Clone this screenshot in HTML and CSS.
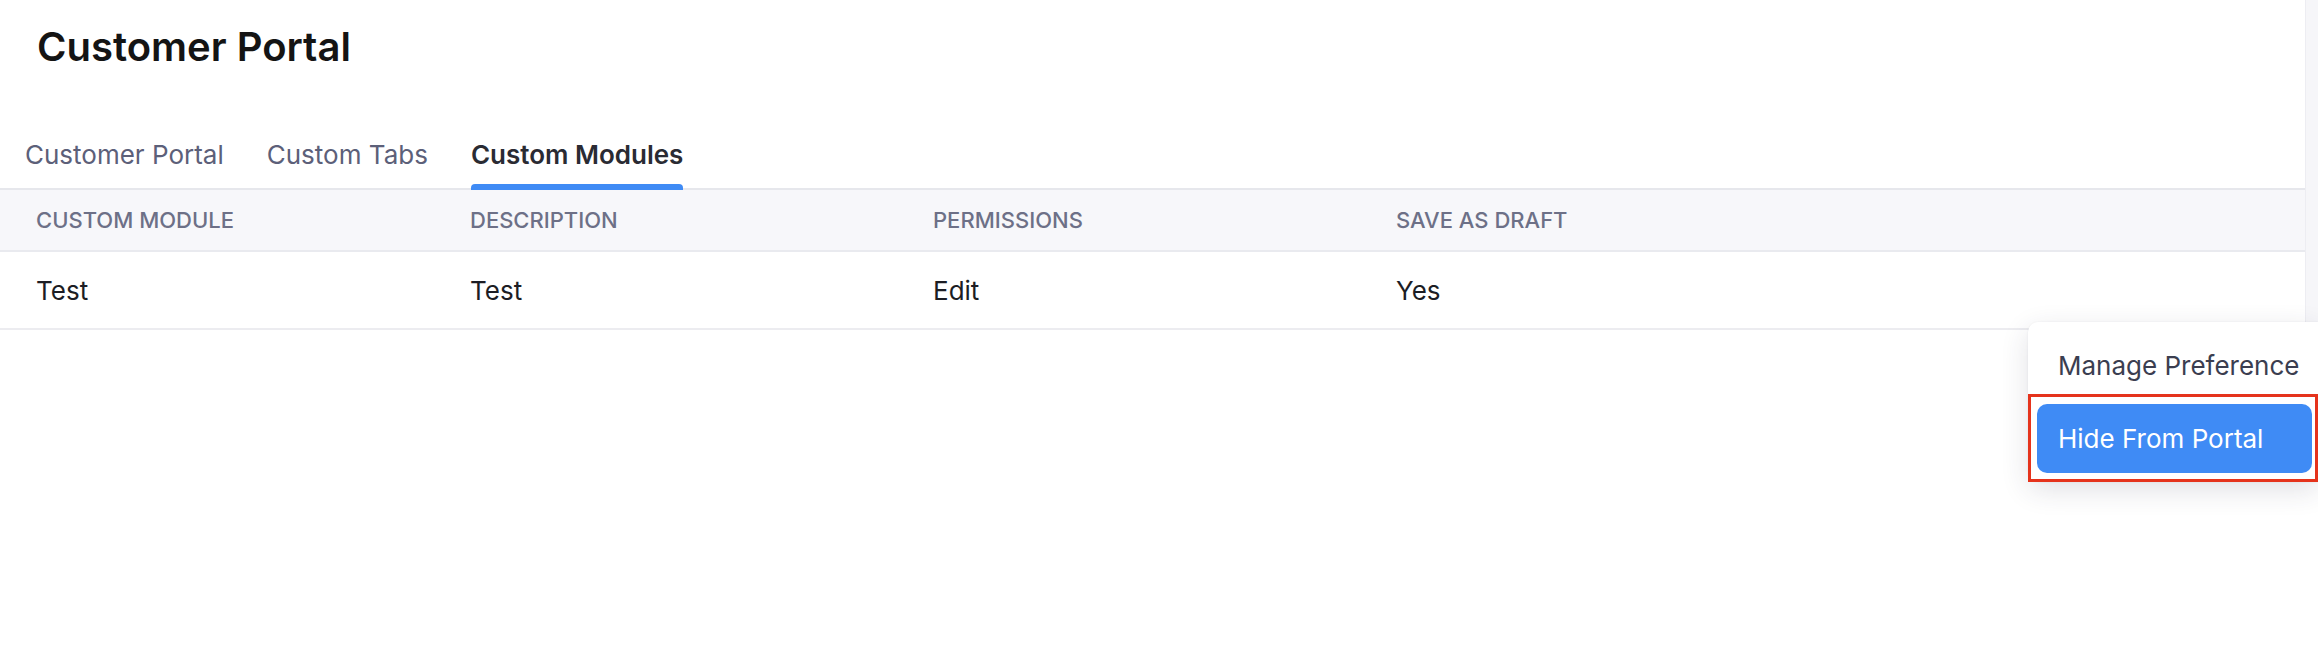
FILE: index.html
```html
<!DOCTYPE html>
<html lang="en">
<head>
<meta charset="utf-8">
<title>Customer Portal</title>
<link rel="stylesheet" href="styles.css">
</head>
<body>
<div class="page">
  <main class="panel">
    <h1 class="title">Customer Portal</h1>
    <nav class="tabs">
      <div class="tab">Customer Portal</div>
      <div class="tab">Custom Tabs</div>
      <div class="tab active">Custom Modules</div>
    </nav>
    <div class="table">
      <div class="row head">
        <div class="cell">Custom Module</div>
        <div class="cell">Description</div>
        <div class="cell">Permissions</div>
        <div class="cell">Save As Draft</div>
      </div>
      <div class="row body">
        <div class="cell">Test</div>
        <div class="cell">Test</div>
        <div class="cell">Edit</div>
        <div class="cell">Yes</div>
      </div>
    </div>
  </main>
  <div class="strip"></div>
</div>
<div class="menu">
  <div class="menu-item">Manage Preference</div>
  <div class="highlight">
    <div class="menu-btn">Hide From Portal</div>
  </div>
</div>
</body>
</html>
```

FILE: styles.css
```css
html, body {
  margin: 0;
  padding: 0;
  overflow: hidden;
  background: #ffffff;
  font-family: Inter, "Noto Sans", "Liberation Sans", sans-serif;
}

.page {
  display: flex;
  align-items: flex-start;
  width: 2318px;
  height: 668px;
}

.panel {
  width: 2305px;
  flex: none;
  background: #ffffff;
  border-top-right-radius: 10px;
}

.strip {
  width: 13px;
  height: 322px;
  background: #f6f6f9;
  border-left: 1px solid #ededf2;
  box-sizing: border-box;
}

.title {
  margin: 0;
  padding: 23px 0 0 37px;
  font-size: 40px;
  line-height: 48px;
  font-weight: 600;
  color: #141414;
}

.tabs {
  display: flex;
  gap: 43px;
  margin-top: 68px;
  padding-left: 25px;
  border-bottom: 2px solid #e6e7ec;
}

.tab {
  position: relative;
  font-size: 26px;
  line-height: 32px;
  padding-bottom: 17px;
  color: #5c6079;
}

.tab.active {
  font-weight: 600;
  color: #2a2b33;
}

.tab.active::after {
  content: "";
  position: absolute;
  left: 0;
  right: 0;
  bottom: -2px;
  height: 6px;
  background: #3f8bf5;
  border-radius: 4px 4px 0 0;
}

.row {
  display: grid;
  grid-template-columns: 434px 463px 463px 1fr;
  align-items: center;
}

.cell {
  padding-left: 36px;
}

.head {
  height: 60px;
  background: #f7f7fa;
  border-bottom: 2px solid #e9eaef;
}

.head .cell {
  font-size: 22px;
  font-weight: 500;
  text-transform: uppercase;
  color: #6d7087;
}

.body {
  height: 76px;
  border-bottom: 2px solid #ececf0;
}

.body .cell {
  font-size: 26px;
  color: #1c1d24;
}

.menu {
  position: absolute;
  left: 2028px;
  top: 322px;
  width: 290px;
  background: #ffffff;
  border-radius: 10px 0 0 10px;
  box-shadow: 0 8px 28px rgba(40, 42, 70, 0.14), 0 0 2px rgba(40, 42, 70, 0.08);
}

.menu-item {
  padding: 27px 0 11px 30px;
  font-size: 26px;
  line-height: 34px;
  color: #3b3e50;
}

.highlight {
  border: 3px solid #e5331c;
  padding: 7px 3px 6px 6px;
}

.menu-btn {
  height: 69px;
  display: flex;
  align-items: center;
  padding-left: 21px;
  background: #3f8bf5;
  border-radius: 10px;
  font-size: 26px;
  color: #ffffff;
}
```
